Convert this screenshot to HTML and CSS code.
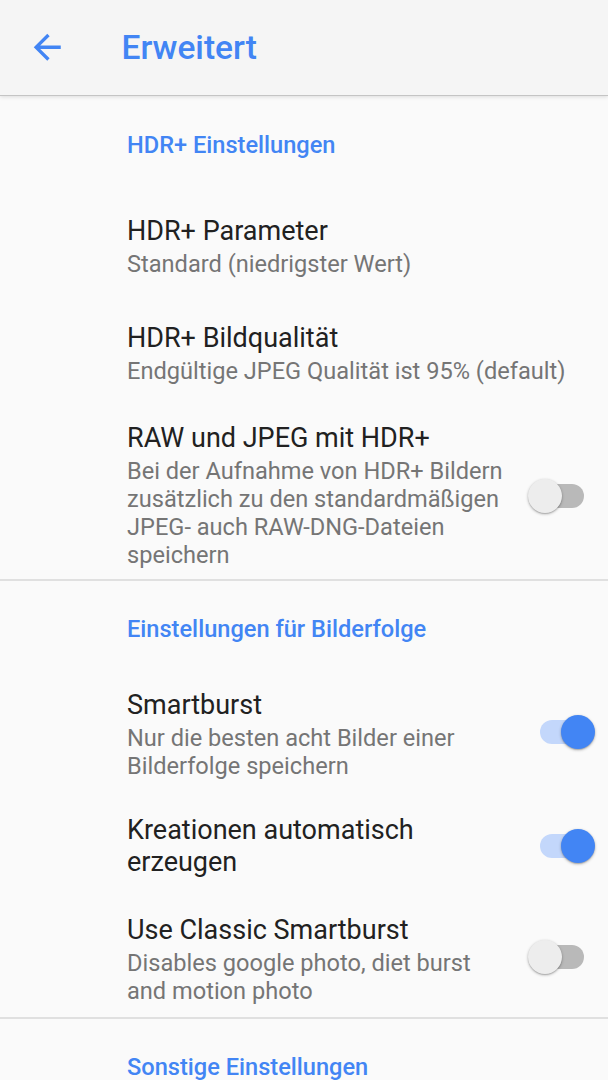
FILE: index.html
```html
<!DOCTYPE html>
<html lang="de">
<head>
<meta charset="utf-8">
<title>Erweitert</title>
<link rel="stylesheet" href="styles.css">
</head>
<body>
<header class="appbar">
  <svg class="back" viewBox="0 0 24 24" aria-hidden="true"><path d="M20 11H7.83l5.59-5.59L12 4l-8 8 8 8 1.41-1.41L7.83 13H20v-2z"/></svg>
  <h1 class="appbar-title">Erweitert</h1>
</header>
<main class="prefs">
  <section class="group group-first">
    <h2 class="cat">HDR+ Einstellungen</h2>
    <div class="item item-a">
      <div class="text">
        <div class="title">HDR+ Parameter</div>
        <div class="sub">Standard (niedrigster Wert)</div>
      </div>
    </div>
    <div class="item item-b">
      <div class="text">
        <div class="title">HDR+ Bildqualität</div>
        <div class="sub">Endgültige JPEG Qualität ist 95% (default)</div>
      </div>
    </div>
    <div class="item item-c">
      <div class="text">
        <div class="title">RAW und JPEG mit HDR+</div>
        <div class="sub">Bei der Aufnahme von HDR+ Bildern zusätzlich zu den standardmäßigen JPEG- auch RAW-DNG-Dateien speichern</div>
      </div>
      <div class="switch"><span class="track"></span><span class="thumb"></span></div>
    </div>
  </section>
  <section class="group">
    <h2 class="cat">Einstellungen für Bilderfolge</h2>
    <div class="item item-d">
      <div class="text">
        <div class="title">Smartburst</div>
        <div class="sub">Nur die besten acht Bilder einer Bilderfolge speichern</div>
      </div>
      <div class="switch on switch-up"><span class="track"></span><span class="thumb"></span></div>
    </div>
    <div class="item item-e">
      <div class="text">
        <div class="title">Kreationen automatisch erzeugen</div>
      </div>
      <div class="switch on"><span class="track"></span><span class="thumb"></span></div>
    </div>
    <div class="item item-f">
      <div class="text">
        <div class="title">Use Classic Smartburst</div>
        <div class="sub">Disables google photo, diet burst and motion photo</div>
      </div>
      <div class="switch switch-up"><span class="track"></span><span class="thumb"></span></div>
    </div>
  </section>
  <section class="group">
    <h2 class="cat">Sonstige Einstellungen</h2>
  </section>
</main>
</body>
</html>
```
FILE: styles.css
```css
html, body {
  margin: 0;
  padding: 0;
}
body {
  width: 608px;
  height: 1080px;
  overflow: hidden;
  background: #fafafa;
  font-family: Roboto, "Noto Sans", sans-serif;
  color: #212121;
}
.appbar {
  position: relative;
  z-index: 1;
  height: 95px;
  box-sizing: border-box;
  display: flex;
  align-items: center;
  padding-left: 27px;
  background: #f5f5f5;
  box-shadow: 0 1px 0 #c4c4c4, 0 2px 4px rgba(0, 0, 0, 0.12);
}
.back {
  width: 40.5px;
  height: 40.5px;
  fill: #4285f4;
  flex: none;
}
.appbar-title {
  margin: 0 0 0 54px;
  font-size: 33.5px;
  font-weight: 500;
  color: #4285f4;
  line-height: 40px;
}
.prefs {
  display: flex;
  flex-direction: column;
}
.group {
  display: flex;
  flex-direction: column;
  border-top: 2px solid #e0e0e0;
  padding-top: 34px;
}
.group-first {
  border-top: none;
  padding-top: 36px;
}
.cat {
  margin: 0;
  padding-left: 127px;
  font-size: 23.6px;
  font-weight: 500;
  line-height: 28px;
  color: #4285f4;
}
.item {
  display: flex;
  align-items: center;
  padding: 0 18px 0 127px;
}
.text {
  flex: 1;
  min-width: 0;
}
.title {
  font-size: 27px;
  line-height: 32px;
  color: #212121;
}
.sub {
  margin-top: 3px;
  font-size: 23.6px;
  line-height: 28px;
  color: #757575;
}
.item-a { margin-top: 56px; }
.item-b { margin-top: 44px; }
.item-c { margin-top: 37px; margin-bottom: 10px; }
.item-d { margin-top: 46px; }
.item-e { margin-top: 34px; }
.item-f { margin-top: 36px; margin-bottom: 12px; }

.switch {
  position: relative;
  flex: none;
  width: 57px;
  height: 34px;
  margin-left: 21px;
}
.switch-up {
  margin-top: -5px;
}
.track {
  position: absolute;
  left: 7px;
  top: 5px;
  width: 44px;
  height: 24px;
  border-radius: 12px;
  background: #b9b9b9;
}
.thumb {
  position: absolute;
  top: 0;
  left: -5px;
  width: 34px;
  height: 34px;
  border-radius: 50%;
  background: #ededed;
  box-shadow: 0 1px 3px rgba(0, 0, 0, 0.3), 0 1px 1px rgba(0, 0, 0, 0.12);
}
.switch.on .track {
  background: #c3d7fb;
}
.switch.on .thumb {
  left: 28px;
  background: #4285f4;
}
```
